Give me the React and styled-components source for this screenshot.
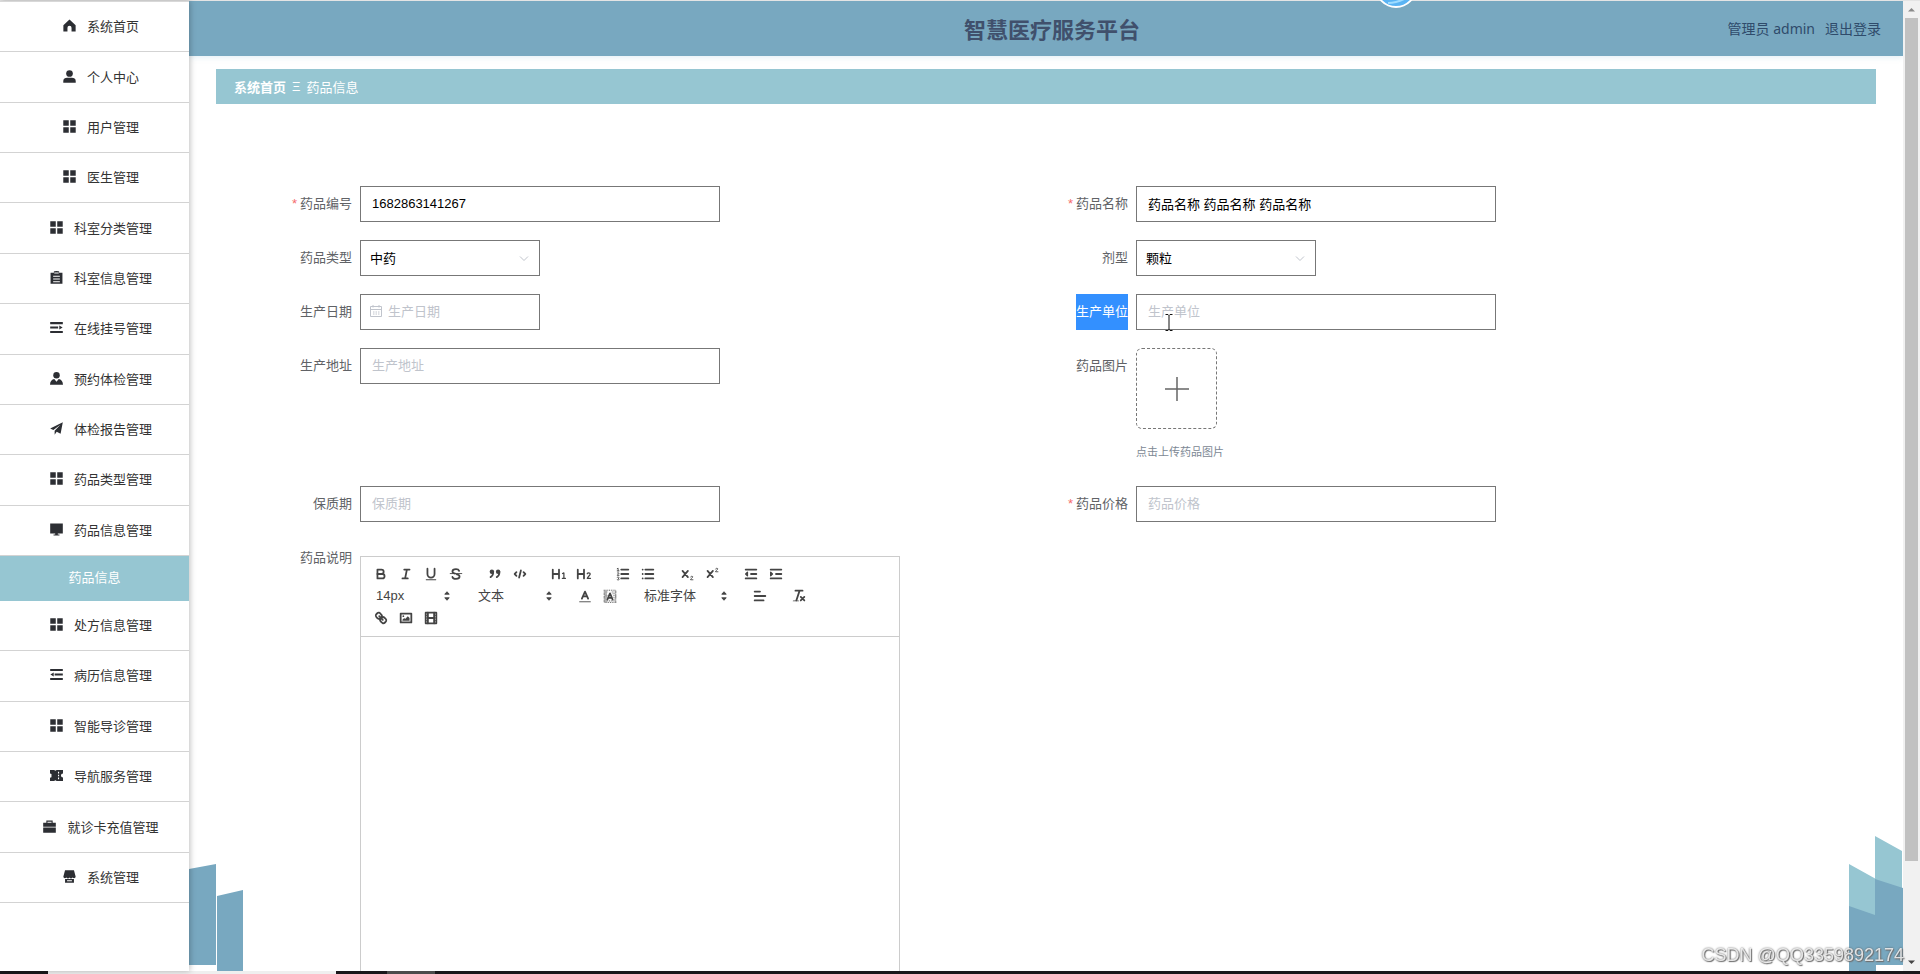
import React from 'react';
import styled, { createGlobalStyle, css } from 'styled-components';

const GlobalStyle = createGlobalStyle`
  * {
    box-sizing: border-box;
  }
  body {
    margin: 0;
    overflow: hidden;
    background: #fff;
    color: #333;
    font-family: 'Liberation Sans', 'Noto Sans CJK SC', sans-serif;
    font-size: 13px;
  }
  button, input, select, textarea {
    font: inherit;
    margin: 0;
  }
`;

const menuIcons = {
  home: <path d="M7 .6 13.6 6.6V13.4H9.2V9.4a2.2 2.2 0 0 0-4.4 0v4H.4V6.6z" />,
  user: (
    <>
      <circle cx="7" cy="3.8" r="3.6" />
      <path d="M.3 13.6v-1.8C.3 9.6 2.2 8.4 4.4 8.4h5.2c2.2 0 4.1 1.2 4.1 3.4v1.8z" />
    </>
  ),
  grid: (
    <path d="M.3.3h5.9v5.9H.3zM7.8.3h5.9v5.9H7.8zM.3 7.8h5.9v5.9H.3zM7.8 7.8h5.9v5.9H7.8z" />
  ),
  order: (
    <path
      fillRule="evenodd"
      d="M.6 2h3.6V.4h1.4C5.8-.1 8.2-.1 8.4.4h1.4V2H13.4v11.8H.6zM3.4 5v1.2h7.2V5zm0 3v1.2h7.2V8zm0 3v1h7.2v-1zM4.6 1.6v1.2h4.8V1.6z"
    />
  ),
  unfold: <path d="M.2 1.2h13.6v2.2H.2zM.2 6h8.6v2.2H.2zM.2 10.800h13.6v2.2H.2zM10 4.800 13.600 7 10 9.200z" />,
  custom: (
    <>
      <circle cx="7" cy="3.600" r="3.500" />
      <path d="M0 13.800c.2-4 2-5.600 4.600-6.200L7 10.400l2.400-2.800c2.600.6 4.400 2.200 4.600 6.200z" />
    </>
  ),
  promotion: <path d="M13.800.2 11.400 12.600 7.200 10.400 5 13.600V9.400L11.200 3 3.600 8.600.2 7z" />,
  monitor: <path d="M.2.600h13.600v10.600H8.400v1.200h1.800v1H3.800v-1h1.800v-1.200H.2z" />,
  fold: <path d="M.2 1h13.600v2.200H.2zM5 5.900h8.800v2.200H5zM.2 10.800h13.600v2.200H.2zM4 4.800v4.400L.4 7z" />,
  ticket: (
    <path
      fillRule="evenodd"
      d="M0 1h4.400l1.400 1L7.200 1H14v3.800a2.200 2.200 0 0 0 0 4.400V13H7.200l-1.400-1-1.400 1H0V9.400l1.600-.6V5.400L0 4.800zm8.600 2v1.800h1.200V3zm0 3.100v1.800h1.200V6.100zm0 3.100v1.800h1.200V9.200z"
    />
  ),
  suitcase: (
    <path
      fillRule="evenodd"
      d="M3.600 3V.6h6.800V3h3.400v4.200H.2V3zm1.200 0h4.400V1.800H4.800zM.2 8.200h13.600v5.400H.2z"
    />
  ),
  shop: (
    <path
      fillRule="evenodd"
      d="M2.200.4h9.600L13.600 7c0 1.800-2 2.400-3.200 1.200-1.200 1.200-2.400 1.200-3.400 0-1 1.200-2.200 1.200-3.400 0C2.400 9.400.4 8.800.4 7zM2.200 9.800h9.600v3.800H2.200zM4.400 11v1h5.200v-1z"
    />
  ),
};

const MENU = [
  { text: '系统首页', icon: 'home' },
  { text: '个人中心', icon: 'user' },
  { text: '用户管理', icon: 'grid' },
  { text: '医生管理', icon: 'grid' },
  { text: '科室分类管理', icon: 'grid' },
  { text: '科室信息管理', icon: 'order' },
  { text: '在线挂号管理', icon: 'unfold' },
  { text: '预约体检管理', icon: 'custom' },
  { text: '体检报告管理', icon: 'promotion' },
  { text: '药品类型管理', icon: 'grid' },
  { text: '药品信息管理', icon: 'monitor', child: '药品信息' },
  { text: '处方信息管理', icon: 'grid' },
  { text: '病历信息管理', icon: 'fold' },
  { text: '智能导诊管理', icon: 'grid' },
  { text: '导航服务管理', icon: 'ticket' },
  { text: '就诊卡充值管理', icon: 'suitcase' },
  { text: '系统管理', icon: 'shop' },
];

const line = { fill: 'none', stroke: '#444', strokeWidth: 2, strokeLinecap: 'round', strokeLinejoin: 'round' };
const thin = { ...line, strokeWidth: 1 };
const solid = { fill: '#444' };

const editorIcons = {
  bold: (
    <>
      <path {...line} d="M5 4h4.5A2.5 2.5 0 0 1 12 6.5 2.5 2.5 0 0 1 9.500 9H5z" />
      <path {...line} d="M5 9h5.5a2.5 2.5 0 0 1 0 5H5z" />
    </>
  ),
  italic: <path {...line} d="M7 4h6M5 14h6M8 14l2-10" />,
  underline: (
    <>
      <path {...line} d="M5 3v6a4 4 0 0 0 8 0V3" />
      <rect {...solid} height="1" rx=".5" width="12" x="3" y="15" />
    </>
  ),
  strike: (
    <>
      <path {...thin} d="M2.500 8.500h13" />
      <path {...line} d="M12.500 5.500C12 4 10.500 3.500 9 3.500 6.500 3.500 5 4.700 5 6.200 5 7.500 6 8.200 8 8.600M10 9.500c2 .4 3 1.200 3 2.400 0 1.500-1.500 2.600-4 2.600-1.800 0-3.500-.6-4-2.200" />
    </>
  ),
  quote: (
    <>
      <circle {...solid} cx="5.500" cy="6.500" r="2.500" />
      <circle {...solid} cx="12.500" cy="6.500" r="2.500" />
      <path {...line} d="M7 6.500c0 3-.8 4.800-3 6M14 6.500c0 3-.8 4.800-3 6" />
    </>
  ),
  code: <path {...line} d="M5 7 3 9l2 2M13 7l2 2-2 2M10 5 8 13" />,
  h1: (
    <>
      <path {...line} d="M2 4v10M9 4v10M2 9h7" />
      <path {...line} strokeWidth="1.4" d="M13 8.500l1.500-.700v6M12.800 14h3.400" />
    </>
  ),
  h2: (
    <>
      <path {...line} d="M2 4v10M9 4v10M2 9h7" />
      <path {...line} strokeWidth="1.4" d="M12.600 8.700c.3-.8 1-1.100 1.700-1.100 1 0 1.700.6 1.700 1.500 0 1.500-2.700 2.700-3.300 4.800h3.600" />
    </>
  ),
  ordered: (
    <>
      <path {...line} d="M7 4h8M7 9h8M7 14h8" />
      <path {...thin} d="M2.500 5.500h2M3.500 5.500v-3l-1 .5M4.500 10.500h-2c0-1 2-1.200 2-2.200 0-.8-1.500-.9-2-.3M2.500 12.700c1-.5 2-.2 2 .5s-.8.8-1 .8c.2 0 1.200.1 1.200.9s-1.300 1-2.200.5" />
    </>
  ),
  bullet: (
    <>
      <path {...line} d="M6 4h9M6 9h9M6 14h9" />
      <path {...line} d="M3 4h0M3 9h0M3 14h0" />
    </>
  ),
  sub: (
    <>
      <path {...line} d="m4 5.500 6 7M10 5.500l-6 7" />
      <path {...thin} d="M13 12.200c.2-.8 2.500-1 2.500.1 0 1-2.500 1.700-2.500 3.200h2.700" />
    </>
  ),
  sup: (
    <>
      <path {...line} d="m4 5.500 6 7M10 5.500l-6 7" />
      <path {...thin} d="M13 3.200c.2-.8 2.500-1 2.500.1 0 1-2.500 1.700-2.500 3.200h2.700" />
    </>
  ),
  outdent: (
    <>
      <path {...line} d="M3 14h12M3 4h12M9 9h6" />
      <path {...line} strokeWidth="1.5" fill="#444" d="M5 7v4L3 9z" />
    </>
  ),
  indent: (
    <>
      <path {...line} d="M3 14h12M3 4h12M9 9h6" />
      <path {...line} strokeWidth="1.5" fill="#444" d="M3 7v4l2-2z" />
    </>
  ),
  color: (
    <>
      <path {...thin} d="M3 15.500h12" />
      <path {...line} d="M5.500 12 9 4l3.500 8M6.800 9.500h4.400" />
    </>
  ),
  background: (
    <>
      <path
        fill="none"
        stroke="#444"
        strokeDasharray="1 1"
        d="M2 2.500h14M3 4.500h4M11 4.500h5M2 6.500h4M12 6.500h4M3 8.500h3M13 8.500h3M2 10.500h3M13 10.500h3M3 12.500h2M14 12.500h2M2 14.500h14M3 16.200h13M2.500 3v13M15.500 3v13M4.500 3v13"
      />
      <path {...line} d="M6 13 9 6l3 7M7 11h4" />
    </>
  ),
  align: <path {...line} d="M3 4h6M3 9h12M3 14h10" />,
  clean: (
    <>
      <path {...line} d="M5 3h8M6 14 9.500 3.500M11 10l4 4M15 10l-4 4" />
      <rect {...solid} height="1" rx=".5" width="7" x="2" y="14" />
    </>
  ),
  link: (
    <>
      <path {...line} d="m7 7 4 4" />
      <path {...line} d="M8.900 4.577a3.476 3.476 0 0 1 .36 4.679A3.476 3.476 0 0 1 4.577 8.900C3.185 7.500 2.035 6.400 4.217 4.217s3.290-1.032 4.683.360z" />
      <path {...line} d="M13.423 9.100a3.476 3.476 0 0 0-4.679-.360 3.476 3.476 0 0 0 .360 4.679c1.392 1.392 2.500 2.542 4.679.360s1.032-3.290-.360-4.679z" />
    </>
  ),
  image: (
    <>
      <rect {...line} x="3" y="4" width="12" height="10" />
      <circle {...solid} cx="6" cy="7" r="1" />
      <path {...solid} d="M5 12v-1l2-2 1 1 3-3 2 2v3z" />
    </>
  ),
  video: (
    <>
      <rect {...line} x="3" y="3" width="12" height="12" />
      <path {...line} d="M5.500 3v12M12.500 3v12M6 9h6" />
      <path {...thin} d="M3 6h2M3 9h2M3 12h2M13 6h2M13 9h2M13 12h2" />
    </>
  ),
};

const Tool = ({ name, label }) => (
  <ToolButton type="button" aria-label={label}>
    <svg viewBox="0 0 18 18">{editorIcons[name]}</svg>
  </ToolButton>
);

const Picker = ({ label, value, wide }) => (
  <PickerBox $wide={wide}>
    <select aria-label={label} defaultValue={value}>
      <option>{value}</option>
    </select>
    <svg viewBox="0 0 18 18">
      <path d="M6.500 7 9 4.200 11.500 7zM6.500 11 9 13.800 11.500 11z" fill="#444" stroke="#444" strokeLinejoin="round" />
    </svg>
  </PickerBox>
);

const Field = ({ id, label, required, selected, children }) => (
  <FormItem>
    <Label htmlFor={id} $required={required}>
      {selected ? <Selected>{label}</Selected> : label}
    </Label>
    <Content>{children}</Content>
  </FormItem>
);

const SelectField = ({ id, value }) => (
  <SelectBox>
    <select id={id} defaultValue={value}>
      <option>{value}</option>
    </select>
    <svg viewBox="0 0 12 12">
      <path d="M2 4.500l4 4 4-4" fill="none" stroke="#c0c4cc" />
    </svg>
  </SelectBox>
);

const App = () => {
  return (
    <Screen>
      <GlobalStyle />
      <Body>
        <Sidebar>
          {MENU.map((item) => (
            <React.Fragment key={item.text}>
              <MenuItem href="#">
                <svg viewBox="0 0 14 14">{menuIcons[item.icon]}</svg>
                {item.text}
              </MenuItem>
              {item.child && <SubItem href="#">{item.child}</SubItem>}
            </React.Fragment>
          ))}
        </Sidebar>

        <Main>
          <LeftTowers viewBox="0 0 54 107">
            <path d="M0 5 27 0V101H0zM28 32 54 26V107H28z" fill="#78a8c0" />
          </LeftTowers>
          <RightTowers viewBox="0 0 54 135">
            <path d="M0 28 27 43V135H0zM26 0 53 15V129H26z" fill="#96c6d2" />
            <path d="M0 70 26 79V43L54 52V129H27V135H0z" fill="#78a8c0" />
          </RightTowers>

          <Header>
            <h1>智慧医疗服务平台</h1>
            <Account>
              <span>管理员 admin</span>
              <a href="#">退出登录</a>
            </Account>
          </Header>

          <Page>
            <Breadcrumb>
              <a href="#">系统首页</a>
              <span>Ξ</span>
              <span>药品信息</span>
            </Breadcrumb>

            <Form>
              <Field id="code" label="药品编号" required>
                <Input id="code" defaultValue="1682863141267" />
              </Field>
              <Field id="name" label="药品名称" required>
                <Input id="name" defaultValue="药品名称 药品名称 药品名称" />
              </Field>
              <Field id="type" label="药品类型">
                <SelectField id="type" value="中药" />
              </Field>
              <Field id="dosage" label="剂型">
                <SelectField id="dosage" value="颗粒" />
              </Field>
              <Field id="date" label="生产日期">
                <DateBox>
                  <svg viewBox="0 0 12 12">
                    <path d="M.5 1.500h11v10H.5zM.5 4.500h11M3 0v2.500M9 0v2.500M3 7h1.500M5.500 7H7M8 7h1.500M3 9h1.500M5.500 9H7M8 9h1.500" fill="none" stroke="#c0c4cc" />
                  </svg>
                  <input id="date" placeholder="生产日期" />
                </DateBox>
              </Field>
              <Field id="maker" label="生产单位" selected>
                <Input id="maker" placeholder="生产单位" />
                <TextCursor viewBox="0 0 8 17">
                  <path d="M.5.500h2.500l1 1 1-1h2.500M4 1.500v14M.5 16.500h2.500l1-1 1 1h2.500" fill="none" stroke="#111" />
                </TextCursor>
              </Field>
              <Field id="address" label="生产地址">
                <Input id="address" placeholder="生产地址" />
              </Field>
              <Field id="photo" label="药品图片">
                <Upload id="photo" type="button">
                  <svg viewBox="0 0 24 24">
                    <path d="M12 0v24M0 12h24" stroke="#666" strokeWidth="1.5" />
                  </svg>
                </Upload>
                <Tip>点击上传药品图片</Tip>
              </Field>
              <Field id="shelf" label="保质期">
                <Input id="shelf" placeholder="保质期" />
              </Field>
              <Field id="price" label="药品价格" required>
                <Input id="price" placeholder="药品价格" />
              </Field>
              <Field id="desc" label="药品说明">
                <Editor>
                  <Toolbar>
                    <Group>
                      <Tool name="bold" label="加粗" />
                      <Tool name="italic" label="斜体" />
                      <Tool name="underline" label="下划线" />
                      <Tool name="strike" label="删除线" />
                    </Group>
                    <Group>
                      <Tool name="quote" label="引用" />
                      <Tool name="code" label="代码" />
                    </Group>
                    <Group>
                      <Tool name="h1" label="标题一" />
                      <Tool name="h2" label="标题二" />
                    </Group>
                    <Group>
                      <Tool name="ordered" label="有序列表" />
                      <Tool name="bullet" label="无序列表" />
                    </Group>
                    <Group>
                      <Tool name="sub" label="下标" />
                      <Tool name="sup" label="上标" />
                    </Group>
                    <Group>
                      <Tool name="outdent" label="减少缩进" />
                      <Tool name="indent" label="增加缩进" />
                    </Group>
                    <Group>
                      <Picker label="字号" value="14px" />
                    </Group>
                    <Group>
                      <Picker label="段落" value="文本" />
                    </Group>
                    <Group>
                      <Tool name="color" label="文字颜色" />
                      <Tool name="background" label="背景颜色" />
                    </Group>
                    <Group>
                      <Picker label="字体" value="标准字体" wide />
                    </Group>
                    <Group>
                      <Tool name="align" label="对齐" />
                    </Group>
                    <Group>
                      <Tool name="clean" label="清除格式" />
                    </Group>
                    <Group>
                      <Tool name="link" label="链接" />
                      <Tool name="image" label="图片" />
                      <Tool name="video" label="视频" />
                    </Group>
                  </Toolbar>
                  <textarea id="desc" />
                </Editor>
              </Field>
            </Form>
          </Page>
        </Main>

        <Scrollbar>
          <svg viewBox="0 0 17 17">
            <path d="M5 10.500 8.500 7l3.500 3.500z" fill="#8a8a8a" />
          </svg>
          <Thumb />
          <svg viewBox="0 0 17 17">
            <path d="M5 6.500 8.500 10 12 6.500z" fill="#444" />
          </svg>
        </Scrollbar>
      </Body>

      <Taskbar>
        <Segment $width="48px" />
        <Segment $width="288px" $color="#efefef" />
        <Segment $width="51px" />
        <Segment $width="48px" $color="#4c4c4c" />
      </Taskbar>

      <FloatBall viewBox="0 0 44 44">
        <circle cx="22" cy="22" r="20" fill="#5ab4f4" stroke="#fff" strokeWidth="2" />
        <path d="M14 38c6 0 10-1 16-4" fill="none" stroke="#9fdcff" strokeWidth="2" />
      </FloatBall>
      <Watermark>CSDN @QQ3359892174</Watermark>
    </Screen>
  );
};

const Screen = styled.div`
  display: flex;
  flex-direction: column;
  height: 100vh;
  border-top: 1px solid #e4e4e4;
`;
const Body = styled.div`
  display: flex;
  flex: 1;
  min-height: 0;
`;

const Sidebar = styled.nav`
  position: relative;
  z-index: 2;
  display: flex;
  flex-direction: column;
  width: 189px;
  padding-bottom: 68px;
  border-top: 1px solid #d8d8d8;
  background: #fff;
  box-shadow: 1px 0 6px rgba(0, 0, 0, 0.26);
`;
const MenuItem = styled.a`
  display: flex;
  flex: 1;
  align-items: center;
  justify-content: center;
  gap: 11px;
  padding: 0 0 2px 13px;
  border-bottom: 1px solid #d3d3d3;
  color: #333;
  text-decoration: none;

  svg {
    width: 13px;
    height: 13px;
    fill: #2c2e33;
  }
`;
const SubItem = styled.a`
  height: 45px;
  background: #96c6d2;
  color: #fff;
  line-height: 44px;
  text-align: center;
  text-decoration: none;
`;

const Main = styled.main`
  position: relative;
  flex: 1;
  min-width: 0;
  overflow: hidden;
`;
const towers = css`
  position: absolute;
  bottom: 0;
  width: 54px;
`;
const LeftTowers = styled.svg`
  ${towers}
  left: 0;
`;
const RightTowers = styled.svg`
  ${towers}
  right: 0;
`;
const Header = styled.header`
  display: grid;
  grid-template-columns: 1fr auto 1fr;
  align-items: center;
  height: 55px;
  padding: 0 22px 2px 34px;
  background: #78a8c0;
  box-shadow: 0 1px 6px rgba(120, 180, 210, 0.24);

  h1 {
    grid-column: 2;
    margin: 0;
    color: #40506c;
    font-size: 22px;
    font-weight: 700;
  }
`;
const Account = styled.div`
  display: flex;
  justify-content: flex-end;
  gap: 10px;
  color: #2f4b6b;
  font-family: 'Noto Sans', 'Noto Sans CJK SC', sans-serif;
  font-size: 14px;

  a {
    color: inherit;
    text-decoration: none;
  }
`;

const Page = styled.div`
  position: relative;
  padding: 13px 27px 0;
`;
const Breadcrumb = styled.nav`
  display: flex;
  align-items: center;
  gap: 6px;
  height: 35px;
  padding: 0 18px;
  background: #96c6d2;
  color: #fff;

  a {
    color: #fff;
    font-weight: 700;
    text-decoration: none;
  }
`;

const Form = styled.form`
  display: grid;
  grid-template-columns: 1fr 1fr;
  gap: 18px 0;
  padding: 82px 54px 0;
`;
const FormItem = styled.div`
  display: flex;
  align-items: flex-start;
`;
const Label = styled.label`
  width: 90px;
  padding-right: 8px;
  color: #606266;
  line-height: 36px;
  text-align: right;
  white-space: nowrap;

  ${({ $required }) =>
    $required &&
    css`
      &::before {
        content: '*';
        margin-right: 3px;
        color: #f56c6c;
      }
    `}
`;
const Selected = styled.span`
  display: inline-block;
  background: #3390ff;
  color: #fff;
`;
const Content = styled.div`
  position: relative;
`;
const control = css`
  height: 36px;
  border: 1px solid #777;
  border-radius: 0;
  outline: none;
  background: #fff;
  color: #000;
`;
const Input = styled.input`
  ${control}
  display: block;
  width: 360px;
  padding: 0 11px 2px;

  &::placeholder {
    color: #c0c4cc;
  }
`;
const SelectBox = styled.div`
  ${control}
  display: flex;
  align-items: center;
  width: 180px;
  padding-right: 9px;

  select {
    flex: 1;
    height: 100%;
    padding: 0 9px;
    border: 0;
    outline: none;
    appearance: none;
    background: none;
    color: #000;
  }
  svg {
    width: 12px;
    height: 12px;
  }
`;
const DateBox = styled.div`
  ${control}
  display: flex;
  align-items: center;
  gap: 6px;
  width: 180px;
  padding: 0 9px 2px;

  svg {
    flex: none;
    width: 12px;
    height: 12px;
  }
  input {
    flex: 1;
    min-width: 0;
    padding: 0;
    border: 0;
    outline: none;
    background: none;
  }
  input::placeholder {
    color: #c0c4cc;
  }
`;
const TextCursor = styled.svg`
  position: absolute;
  top: 20px;
  left: 29px;
  width: 8px;
  height: 17px;
`;
const Upload = styled.button`
  display: flex;
  align-items: center;
  justify-content: center;
  width: 81px;
  height: 81px;
  border: 1px dashed #777;
  border-radius: 6px;
  background: #fff;

  svg {
    width: 24px;
    height: 24px;
  }
`;
const Tip = styled.div`
  padding-top: 7px;
  color: #7c8894;
  font-size: 11px;
  line-height: 32px;
`;

const Editor = styled.div`
  width: 540px;
  margin-top: 16px;
  border: 1px solid #ccc;
  background: #fff;

  textarea {
    display: block;
    width: 100%;
    height: 450px;
    padding: 12px;
    border: 0;
    outline: none;
    resize: none;
  }
`;
const Toolbar = styled.div`
  display: flex;
  flex-wrap: wrap;
  padding: 6px 6px 7px 7px;
  border-bottom: 1px solid #ccc;
`;
const Group = styled.div`
  display: flex;
  margin-right: 14px;
`;
const ToolButton = styled.button`
  display: flex;
  align-items: center;
  justify-content: center;
  width: 25px;
  height: 22px;
  padding: 0;
  border: 0;
  background: none;

  svg {
    width: 16px;
    height: 16px;
  }
`;
const PickerBox = styled.div`
  display: flex;
  align-items: center;
  width: ${({ $wide }) => ($wide ? '97px' : '88px')};
  height: 22px;

  select {
    flex: 1;
    min-width: 0;
    padding: 0 0 2px 8px;
    border: 0;
    outline: none;
    appearance: none;
    background: none;
    color: #444;
  }
  svg {
    flex: none;
    width: 18px;
    height: 16px;
  }
`;

const Scrollbar = styled.div`
  display: flex;
  flex-direction: column;
  width: 17px;
  background: #f1f1f1;
`;
const Thumb = styled.div`
  flex: 1;
  margin: 0 2px 93px;
  background: #c1c1c1;
`;

const Taskbar = styled.div`
  display: flex;
  height: 3px;
  background: #1a181b;
`;
const Segment = styled.div`
  width: ${({ $width }) => $width};
  background: ${({ $color }) => $color || '#1a181b'};
`;
const FloatBall = styled.svg`
  position: fixed;
  z-index: 3;
  top: -35px;
  left: 1374px;
  width: 44px;
  height: 44px;
`;
const Watermark = styled.div`
  position: fixed;
  z-index: 3;
  right: 16px;
  bottom: 8px;
  color: rgba(255, 255, 255, 0.8);
  font-size: 18px;
  line-height: 22px;
  text-shadow: 0 0 2px #555, 1px 1px 1px #777;
`;

export default App;
